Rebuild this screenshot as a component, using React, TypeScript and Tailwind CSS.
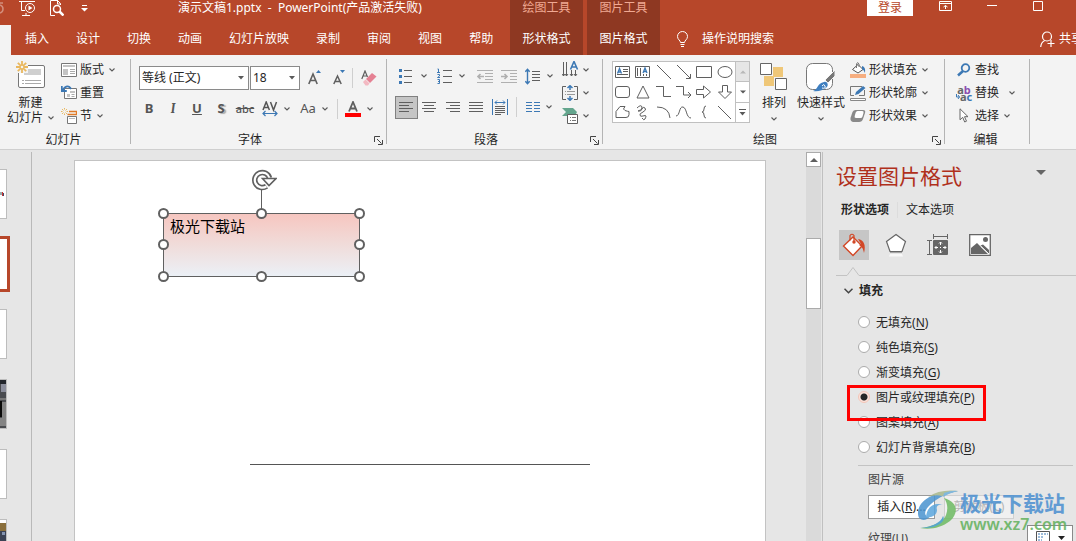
import React, { useState } from "react";

type Kids = { children?: React.ReactNode };

function Chevron() {
  return (
    <svg width="6" height="4" viewBox="0 0 6 4" fill="none" className="shrink-0">
      <path d="M.5 .5 3 3 5.500 .5" stroke="#5a5a5a" strokeWidth="1.1" />
    </svg>
  );
}

function Caret() {
  return (
    <svg width="6" height="4" viewBox="0 0 6 4" className="pointer-events-none absolute right-[5px] top-[10px]">
      <path d="M0 0h6L3 3.5z" fill="#5a5a5a" />
    </svg>
  );
}

function Group({ label, width, launcher, children }: Kids & { label: string; width: string; launcher?: boolean }) {
  return (
    <section aria-label={label} className={`relative flex shrink-0 flex-col pt-[3px] ${width}`}>
      <div className="flex h-[69px]">{children}</div>
      <div className={`flex h-[22px] items-center justify-center pt-[3px] ${launcher ? "pr-[18px]" : "pr-1"}`}>{label}</div>
      {launcher && (
        <button aria-label={label + "设置"} className="absolute bottom-1 right-1">
          <svg width="9" height="9" viewBox="0 0 9 9" fill="none" stroke="#444">
            <path d="M.5 6V.5H6M3 3l4.5 4.5M8.5 4v4.500H4" />
          </svg>
        </button>
      )}
      <span className="absolute bottom-[5px] right-0 top-1 w-px bg-[#b4b4b4]" />
    </section>
  );
}

function Row({ icon, label, menu, wide }: { icon: React.ReactNode; label: string; menu?: boolean; wide?: boolean }) {
  return (
    <button className={`flex h-[23px] items-center whitespace-nowrap ${wide ? "gap-[10px]" : "gap-[5px]"}`}>
      <span className="flex items-center gap-[3px]">
        <span className="flex w-4 justify-center">{icon}</span>
        {label}
      </span>
      {menu && <Chevron />}
    </button>
  );
}

function Tool({ label, menu, children }: Kids & { label: string; menu?: boolean }) {
  return (
    <button aria-label={label} className={`flex h-6 items-center ${menu ? "w-[38px] gap-[6px] pl-1" : "w-6 justify-center"}`}>
      {children}
      {menu && <Chevron />}
    </button>
  );
}

function Lines({ rows, color = "#5f5f5f" }: { rows: [number, number][]; color?: string }) {
  return (
    <svg width="16" height="14" viewBox="0 0 16 14" stroke={color}>
      {rows.map(([a, b], i) => (
        <path key={i} d={`M${a} ${i * 3 + 2.5}H${b}`} />
      ))}
    </svg>
  );
}

const tabs = ["插入", "设计", "切换", "动画", "幻灯片放映", "录制", "审阅", "视图", "帮助"];

function Header() {
  return (
    <header className="flex h-[55px] shrink-0 overflow-hidden bg-[#b7472a] text-white">
      <div className="flex w-[510px] shrink-0 flex-col justify-between">
        <div className="flex h-4 items-center">
          <svg width="4" height="14" viewBox="0 0 4 14" fill="none" stroke="#d38e7c" strokeWidth="1.500">
            <path d="M0 2h3M0 12c4-1 4-7 0-8" />
          </svg>
          <button aria-label="从头开始" className="ml-[15px]">
            <svg width="17" height="16" viewBox="0 0 17 16" fill="none" stroke="#fff">
              <path d="M0 1.500h16M2.500 2v8.500H6M3 15.500h8M7 13v2" />
              <circle cx="11" cy="8" r="4.500" />
              <path d="M9.500 5.500 13.500 8l-4 2.500z" fill="#fff" stroke="none" />
            </svg>
          </button>
          <button aria-label="打印预览" className="ml-[14px]">
            <svg width="14" height="16" viewBox="0 0 14 16" fill="none" stroke="#fff">
              <path d="M5 15.500H.5V.5h7l3 3V5M7.500 0v4h3" />
              <circle cx="7" cy="9" r="3.500" strokeWidth="1.500" />
              <path d="m9.500 11.500 4 4" strokeWidth="2.500" />
            </svg>
          </button>
          <button aria-label="自定义快速访问工具栏" className="ml-[17px]">
            <svg width="7" height="7" viewBox="0 0 7 7" fill="#fff">
              <path d="M1 0h5v1H1zM0 3h7L3.500 6.500z" />
            </svg>
          </button>
          <h1 className="ml-[90px] whitespace-pre">演示文稿1.pptx{"  -  "}PowerPoint(产品激活失败)</h1>
        </div>
        <nav className="flex h-[30px]">
          <span className="w-[11px] bg-[#f3f3f3]" />
          {tabs.map((t) => (
            <button key={t} className="whitespace-nowrap pb-[2px] pl-[14px] pr-[13px]">{t}</button>
          ))}
        </nav>
      </div>
      {[["绘图工具", "形状格式"], ["图片工具", "图片格式"]].map(([a, b]) => (
        <div key={a} className="mr-1 flex w-[73px] shrink-0 flex-col items-center justify-between bg-[#8e3822]">
          <span className="h-4 leading-4 text-[#f0a993]">{a}</span>
          <button className="h-[30px] pb-[2px]">{b}</button>
        </div>
      ))}
      <div className="flex min-w-0 flex-1 flex-col justify-between">
        <div className="flex h-4 items-start justify-end pr-[33px]">
          <button className="h-4 w-[46px] bg-white leading-3 text-[#b7472a]">登录</button>
          <button aria-label="功能区显示选项" className="ml-[26px] mt-px">
            <svg width="13" height="10" viewBox="0 0 13 10" fill="none" stroke="#fff">
              <path d="M.5.5h12v9H.5zM1 2.500h11M6.500 8V4.500M4.500 6l2-1.500 2 1.500" />
            </svg>
          </button>
          <button aria-label="最小化" className="ml-[35px] mt-[5px]">
            <svg width="10" height="1" viewBox="0 0 10 1" fill="#fff"><path d="M0 0h10v1H0z" /></svg>
          </button>
          <button aria-label="最大化" className="ml-[36px] mt-px">
            <svg width="10" height="10" viewBox="0 0 10 10" fill="none" stroke="#fff"><path d="M.5.5h9v9h-9z" /></svg>
          </button>
        </div>
        <div className="flex h-[30px] items-center pb-[2px] pl-[12px]">
          <svg width="13" height="17" viewBox="0 0 13 17" fill="none" stroke="#fff">
            <path d="M4.500 11.500c0-2-3-3-3-6a5 5 0 0 1 10 0c0 3-3 4-3 6zM4.500 13.500h4M5 15.500h3" />
          </svg>
          <button className="ml-[13px] whitespace-nowrap">操作说明搜索</button>
          <button className="ml-auto flex w-[36px] items-center gap-1 overflow-hidden whitespace-nowrap">
            <svg width="15" height="17" viewBox="0 0 15 17" fill="none" stroke="#fff" strokeWidth="1.200" className="shrink-0">
              <circle cx="7" cy="5.500" r="4.500" />
              <path d="M.7 16c.3-3.500 2-5.500 4-6.500M11 9v7M7.500 12.500h7" />
            </svg>
            共享
          </button>
        </div>
      </div>
    </header>
  );
}

function Spark({ r }: { r: number }) {
  return (
    <g stroke="#e9b85f" strokeWidth={r > 4 ? 1.8 : 1}>
      <path d={`M${r} 0V${r - 2}M${r} ${r + 2}V${2 * r}M0 ${r}H${r - 2}M${r + 2} ${r}H${2 * r}`} />
      <path d={`M${r * 0.3} ${r * 0.3}L${r * 0.7} ${r * 0.7}M${r * 1.3} ${r * 1.3}L${r * 1.7} ${r * 1.7}M${r * 1.7} ${r * 0.3}L${r * 1.3} ${r * 0.7}M${r * 0.7} ${r * 1.3}L${r * 0.3} ${r * 1.7}`} />
    </g>
  );
}

function SlidesGroup() {
  return (
    <Group label="幻灯片" width="w-[131px]">
      <button className="flex w-[61px] flex-col items-center pt-[3px] leading-[15px]">
        <svg width="30" height="28" viewBox="0 0 30 28" fill="none">
          <rect x="2.500" y="4.500" width="26" height="22" rx="1.500" fill="#fff" stroke="#777" />
          <path d="M12 8h13v6H8v-3z" fill="#cfcfcf" />
          <path d="M6 19.500h2m1 0h16M6 22.500h2m1 0h16" stroke="#aaa" />
          <path d="M0 0h12v12H0z" fill="#f3f3f3" />
          <Spark r={6} />
          <circle cx="6" cy="6" r="2" stroke="#e9b85f" strokeWidth="1.500" />
        </svg>
        <span className="mt-[6px]">新建</span>
        <span className="flex items-center gap-[5px] whitespace-nowrap">幻灯片<Chevron /></span>
      </button>
      <div className="flex flex-col items-start">
        <Row label="版式" menu icon={
          <svg width="16" height="14" viewBox="0 0 16 14" fill="none">
            <path d="M.5.5h15v13H.5z" fill="#fff" stroke="#777" />
            <path d="M2 2h12v2H2zM2 6h5v6H2z" fill="#c4c4c4" />
            <path d="M9 6.500h5M9 8.500h5M9 10.500h5" stroke="#aaa" />
          </svg>
        } />
        <Row label="重置" icon={
          <svg width="16" height="15" viewBox="0 0 16 15" fill="none">
            <path d="M3.500 3.500h12v10h-12z" fill="#fff" stroke="#777" />
            <path d="M9 6h5v2H9zM6 9h3v3H6z" fill="#c4c4c4" />
            <path d="M10.500 9.500h3M10.500 11.500h3" stroke="#aaa" />
            <path d="M10 4C8 0 4 .5 2 5M.8 1v5h5" stroke="#3c78b4" strokeWidth="1.800" />
          </svg>
        } />
        <Row label="节" menu icon={
          <svg width="16" height="16" viewBox="0 0 16 16" fill="none">
            <Spark r={3.5} />
            <path d="M8 3.500h7.500v3H6.500" stroke="#e07b28" strokeWidth="1.300" />
            <path d="M6.500 8.500h9v7h-9z" fill="#fff" stroke="#777" />
            <path d="M8 10.500h6" stroke="#bbb" />
          </svg>
        } />
      </div>
    </Group>
  );
}

function FontGroup() {
  return (
    <Group label="字体" width="w-[256px]" launcher>
      <div className="flex flex-col gap-[7px] pt-2">
        <div className="flex h-6 items-center pl-2">
          <label className="relative">
            <select aria-label="字体名称" className="h-6 w-[110px] appearance-none border border-[#8a8a8a] bg-white px-[2px] text-[12px] text-[#262626]"><option>等线 (正文)</option></select>
            <Caret />
          </label>
          <label className="relative ml-px">
            <select aria-label="字号" className="h-6 w-[50px] appearance-none border border-[#8a8a8a] bg-white px-[2px] text-[12px] text-[#262626]"><option>18</option></select>
            <Caret />
          </label>
          <button aria-label="增大字号" className="ml-2">
            <svg width="13" height="16" viewBox="0 0 13 16" fill="none">
              <path d="M.8 14 5 4l4.200 10M2.300 10.500h5.400" stroke="#5f5f5f" strokeWidth="1.600" /><path d="M8 3h5l-2.500-3z" fill="#3c78b4" />
            </svg>
          </button>
          <button aria-label="减小字号" className="ml-3">
            <svg width="13" height="16" viewBox="0 0 13 16" fill="none">
              <path d="M.8 14 4.500 6l3.700 8M2 11.500h5" stroke="#5f5f5f" strokeWidth="1.500" /><path d="M7 0h5L9.500 3z" fill="#3c78b4" />
            </svg>
          </button>
          <span className="ml-[6px] h-5 w-px bg-[#cfcfcf]" />
          <button aria-label="清除所有格式" className="ml-2">
            <svg width="16" height="16" viewBox="0 0 16 16" fill="none">
              <path d="M.8 9 4 1l2.500 6M2 6h4" stroke="#5f5f5f" strokeWidth="1.200" />
              <path d="m2 12 2.500-2.500 4 4L7 15.500H4.500z" fill="#f3b9c2" /><path d="m5 9 6-6 4.500 3.500-6.500 6.500z" fill="#e58193" />
            </svg>
          </button>
        </div>
        <div className="flex h-6 items-center pl-[6px] text-[13px] font-bold text-[#555]">
          <Tool label="加粗">B</Tool>
          <Tool label="倾斜"><i className="font-serif">I</i></Tool>
          <Tool label="下划线"><u>U</u></Tool>
          <Tool label="文字阴影"><span className="[text-shadow:2px_1px_1px_#aaa]">S</span></Tool>
          <Tool label="删除线"><s className="text-[11px] font-medium">abc</s></Tool>
          <span className="w-[1px]" />
          <Tool label="字符间距" menu>
            <svg width="16" height="16" viewBox="0 0 16 16" fill="none" className="shrink-0">
              <path d="M1 9 4.200 1 7.400 9M2 6.500h4.400M8.500 1l3 8 3-8" stroke="#555" strokeWidth="1.500" />
              <path d="M1 12.500h14M3.500 10 1 12.500 3.500 15M12.500 10l2.500 2.500-2.500 2.500" stroke="#3c78b4" strokeWidth="1.200" />
            </svg>
          </Tool>
          <Tool label="更改大小写" menu><span className="w-4 font-normal">Aa</span></Tool>
          <span className="mx-[3px] h-5 w-px bg-[#cfcfcf]" />
          <Tool label="字体颜色" menu>
            <svg width="16" height="16" viewBox="0 0 16 16" fill="none" className="shrink-0">
              <path d="M4 10.500 8 1l4 9.500M5.200 7.500h5.600" stroke="#5f5f5f" strokeWidth="1.800" /><path d="M0 12h16v4H0z" fill="#f00" />
            </svg>
          </Tool>
        </div>
      </div>
    </Group>
  );
}

function Indent({ right }: { right?: boolean }) {
  return (
    <svg width="16" height="15" viewBox="0 0 16 15" fill="none" stroke="#b0b0b0">
      <path d={right ? "M0 1.500h16M9 4.500h7M9 7.500h7M9 10.500h7M0 13.500h16" : "M0 1.500h16M8 4.500h8M8 7.500h8M8 10.500h8M0 13.500h16"} />
      <path d={right ? "M0 7.500h6M3.500 5 6 7.500 3.500 10" : "M7 7.500H1M3.500 5 1 7.500 3.500 10"} strokeWidth="1.600" />
    </svg>
  );
}

function ParagraphGroup() {
  return (
    <Group label="段落" width="w-[216px]" launcher>
      <div className="flex w-[172px] flex-col gap-[7px] pl-2 pt-[6px]">
        <div className="flex h-6 items-center">
          <Tool label="项目符号" menu>
            <svg width="16" height="16" viewBox="0 0 16 16" className="shrink-0">
              <path d="M5 2.500h8M5 8.500h8M5 14.500h8" stroke="#5f5f5f" /><path d="M0 1h3v3H0zM0 7h3v3H0zM0 13h3v3H0z" fill="#3c78b4" />
            </svg>
          </Tool>
          <Tool label="编号" menu>
            <svg width="16" height="16" viewBox="0 0 16 16" className="shrink-0" fill="none">
              <path d="M6 2.500h9M6 8.500h9M6 14.500h9" stroke="#5f5f5f" />
              <path d="M.5 1h1v3M0 4.500h3M.5 6.500h2V8L.5 9.500h2.500M.5 11.500h2v4h-2M1 13.500h1.500" stroke="#3c78b4" />
            </svg>
          </Tool>
          <span className="w-[2px]" />
          <Tool label="减少缩进"><Indent /></Tool>
          <Tool label="增加缩进"><Indent right /></Tool>
          <Tool label="行距" menu>
            <svg width="16" height="17" viewBox="0 0 16 17" fill="none" className="shrink-0">
              <path d="M7 3.500h8M7 6.500h8M7 9.500h8M7 12.500h8" stroke="#5f5f5f" />
              <path d="M2.500 1v15M.3 3.800 2.500 1.300 4.700 3.800M.3 13.200l2.200 2.500 2.200-2.500" stroke="#3c78b4" strokeWidth="1.400" />
            </svg>
          </Tool>
        </div>
        <div className="flex h-6 items-center">
          <button aria-label="左对齐" aria-pressed="true" className="flex h-[23px] w-[23px] items-center justify-center border border-[#808080] bg-[#c5c5c5]">
            <Lines rows={[[1, 15], [1, 11], [1, 15], [1, 11]]} />
          </button>
          <Tool label="居中"><Lines rows={[[1, 15], [3, 13], [1, 15], [3, 13]]} /></Tool>
          <Tool label="右对齐"><Lines rows={[[1, 15], [5, 15], [1, 15], [5, 15]]} /></Tool>
          <Tool label="两端对齐"><Lines rows={[[1, 15], [1, 15], [1, 15], [1, 15]]} /></Tool>
          <Tool label="分散对齐">
            <svg width="16" height="16" viewBox="0 0 16 16" fill="none">
              <path d="M3 7.500h10M3 9.500h10M3 11.500h10M3 13.500h10M3 15.500h6" stroke="#5f5f5f" />
              <path d="M.5 0v16M15.500 0v16M3 3.500h10M5 1.500l-2 2 2 2M11 1.500l2 2-2 2" stroke="#3c78b4" />
            </svg>
          </Tool>
          <span className="ml-1 mr-[5px] h-5 w-px bg-[#cfcfcf]" />
          <Tool label="分栏" menu>
            <svg width="14" height="12" viewBox="0 0 14 12" className="shrink-0">
              <path d="M0 1.500h6M8 1.500h6M0 4.500h6M8 4.500h6M0 7.500h6M8 7.500h6M0 10.500h6M8 10.500h6" stroke="#3c78b4" />
            </svg>
          </Tool>
        </div>
      </div>
      <div className="flex flex-col pl-[3px]">
        <button aria-label="文字方向" className="flex h-[23px] items-center gap-1">
          <svg width="17" height="17" viewBox="0 0 17 17" fill="none">
            <path d="M1.500 1v14M4.500 1v14M9.500 9v6M13.500 9v6M0 13l1.500 2L3 13l1.500 2L6 13M8 13l1.500 2 1.500-2M12 13l1.500 2 1.500-2" stroke="#5f5f5f" />
            <path d="M8.500 8.500 12 .5l3.500 8M9.500 6h5" stroke="#3c78b4" strokeWidth="1.600" />
          </svg>
          <Chevron />
        </button>
        <button aria-label="对齐文本" className="flex h-[23px] items-center gap-1">
          <svg width="17" height="16" viewBox="0 0 17 16" fill="none">
            <path d="M4 1.500H.5v13H4M12 1.500h3.500v13H12" stroke="#5f5f5f" />
            <path d="M3 6.500h1M5 6.500h8M3 9.500h1M5 9.500h8" stroke="#999" />
            <path d="M8 .5V5M5.500 3 8 .7 10.500 3M8 11v4.500M5.500 13 8 15.300l2.500-2.300" stroke="#3c78b4" strokeWidth="1.500" />
          </svg>
          <Chevron />
        </button>
        <button aria-label="转换为 SmartArt" className="flex h-[23px] items-center gap-1">
          <svg width="17" height="17" viewBox="0 0 17 17" fill="none">
            <path d="M0 1h11l4 4-2 4H0l4-4z" fill="#63a58d" />
            <path d="M5.500 7.500h10v9h-10z" fill="#fff" stroke="#5f5f5f" />
            <path d="M8 10.500h1M10 10.500h4M8 13.500h1M10 13.500h4" stroke="#777" />
          </svg>
          <Chevron />
        </button>
      </div>
    </Group>
  );
}

const shapePaths = [
  "M2.500 4.500h14v11h-14zM10 7.500h5M10 9.500h5M4 12.500h11",
  "M2.500 4.500h14v11h-14zM4.500 6v8M7.500 6v8M10.500 12v2M13.500 12v2",
  "M3 3l14 14", "M3 3l13 13M16.500 12v4.500H12", "M2.500 4.500h15v11h-15z",
  "M17 10a7 5.500 0 1 1-14 0 7 5.500 0 1 1 14 0z",
  "M5 4.500h9q2.500 0 2.500 2.500v6q0 2.500-2.500 2.500H5q-2.500 0-2.500-2.500v-6q0-2.500 2.500-2.500z",
  "M10 4l6 12H4z", "M2 4.500h7.500v10H17", "M2 4.500h7.500v8.500H17M14 10l3 3-3 3",
  "M2.500 7.500h7V4l7 6-7 6v-3.500h-7z", "M7.500 3.500h5V10h4L10 16.500 3.500 10h4z",
  "M3 15.500v-6l4-5h5q-3 3 0 4t4 1v3q0 3-3 3z",
  "M4 6q4-4 5-1t-4 4q3 1 4-2t3-1-2 4-3 3q0 2 3 1t3 0-1 3-3-1",
  "M3 5q12 0 13 11", "M2 14C6 14 5 4 9 5s3 11 8 11", "M12 4q-2 0-2 3 0 3-2 3 2 0 2 3 0 3 2 3", "M3 4l13 13",
];

function DrawingGroup() {
  return (
    <Group label="绘图" width="w-[342px]" launcher>
      <div className="ml-[9px] mt-[3px] flex h-[62px] w-[138px] shrink-0 border border-[#c0c0c0] bg-white">
        <div className="grid w-[122px] grid-cols-6">
          {shapePaths.map((d, i) => (
            <button key={i} aria-label={`形状 ${i + 1}`} className="h-5 w-5">
              <svg width="20" height="20" viewBox="0 0 20 20" fill="none" stroke="#5f5f5f">
                <path d={d} />
                {i === 0 && <path d="M4.500 11.500 6.500 6.500l2 5M5 10h3" stroke="#3c78b4" strokeWidth="1.300" />}
                {i === 1 && <path d="M10 11l2-5 2 5M10.500 9.500h3" stroke="#3c78b4" strokeWidth="1.300" />}
              </svg>
            </button>
          ))}
        </div>
        <div className="flex flex-1 flex-col divide-y divide-[#c0c0c0] border-l border-[#c0c0c0]">
          <button aria-label="上一行" className="flex flex-1 items-center justify-center bg-[#e6e6e6]">
            <svg width="6" height="4" viewBox="0 0 6 4" fill="#b8b8b8"><path d="M0 3.500h6L3 .5z" /></svg>
          </button>
          <button aria-label="下一行" className="flex flex-1 items-center justify-center">
            <svg width="6" height="4" viewBox="0 0 6 4" fill="#5a5a5a"><path d="M0 .5h6L3 3.500z" /></svg>
          </button>
          <button aria-label="其他形状" className="flex flex-1 items-center justify-center">
            <svg width="7" height="7" viewBox="0 0 7 7" fill="#5a5a5a"><path d="M0 0h7v1H0zM.5 3h6l-3 3.500z" /></svg>
          </button>
        </div>
      </div>
      <button className="ml-[6px] flex w-9 flex-col items-center pt-[5px]">
        <svg width="28" height="28" viewBox="0 0 28 28">
          <path d="M13 4h10v10H13zM4 13h10v10H4z" fill="#efc778" />
          <path d="M.5.500h11v11H.5zM15.500 15.500h11v11h-11z" fill="#fff" stroke="#666" />
        </svg>
        <span className="mb-[7px] mt-1 leading-[15px]">排列</span>
        <Chevron />
      </button>
      <button className="ml-1 flex w-[50px] flex-col items-center whitespace-nowrap pt-[5px]">
        <svg width="30" height="30" viewBox="0 0 30 30" fill="none" className="-mb-[2px]">
          <rect x=".5" y=".5" width="26" height="26" rx="6" fill="#fff" stroke="#777" />
          <path d="M29 7v6l-7 7-3-3z" fill="#777" stroke="#f3f3f3" />
          <path d="M18 19c4-1 5 4 2 6s-8 4-13 3c5-1 4-8 11-9z" fill="#3f7fc0" />
          <path d="M16 23q2-3 3 0t-3 2" stroke="#fff" />
        </svg>
        <span className="mb-[7px] mt-1 leading-[15px]">快速样式</span>
        <Chevron />
      </button>
      <div className="ml-1 flex flex-col items-start">
        <Row label="形状填充" menu icon={
          <svg width="16" height="16" viewBox="0 0 16 16" fill="none">
            <path d="M8 2.500 13 7.500 8 11 2.500 7.500z" fill="#fff" stroke="#555" /><path d="M6.500 6V2q1-3 2.500 0v3" stroke="#777" />
            <path d="M12 4q4 1 3 7-1-3-3-4z" fill="#3c78b4" /><path d="M0 12h16v4H0z" fill="#f6ae80" />
          </svg>
        } />
        <Row label="形状轮廓" menu icon={
          <svg width="16" height="16" viewBox="0 0 16 16" fill="none">
            <path d="M12 1.500H.5v9H4M14.500 5v5.500H9" stroke="#777" /><path d="m5 10 1-3 7-6 2.500 2-7 6z" fill="#3c78b4" />
            <path d="M.5 13.500h15v2H.5z" fill="#fff" stroke="#888" />
          </svg>
        } />
        <Row label="形状效果" menu icon={
          <svg width="16" height="14" viewBox="0 0 16 14">
            <path d="M3 13q-3-1-2.500-4l2-6q1-2 3-2h7.500q3 0 2 3l-2 6q-1 3-4 3z" fill="#8a8a8a" />
            <path d="M6 9q-2 0-1.300-2l1-3.500Q6.200 2 7.500 2h4.700q2 0 1.300 2L12.500 7.500Q12 9 10.500 9z" fill="#fff" />
          </svg>
        } />
      </div>
    </Group>
  );
}

function EditingGroup() {
  return (
    <Group label="编辑" width="w-[85px]">
      <div className="ml-[11px] flex flex-col items-start">
        <Row label="查找" icon={
          <svg width="14" height="14" viewBox="0 0 14 14" fill="none" stroke="#3c78b4">
            <circle cx="8.500" cy="5" r="3.800" strokeWidth="1.800" /><path d="M6 8 1 12.500" strokeWidth="2.500" />
          </svg>
        } />
        <Row label="替换" menu wide icon={
          <span className="flex w-4 flex-col text-[11px] font-bold leading-[7px]">
            <span className="text-[#666]">a<span className="text-[#8a4fb0]">b</span></span>
            <span className="flex items-center text-[#666]">
              <svg width="4" height="5" viewBox="0 0 4 5" fill="none" stroke="#3c78b4" className="shrink-0"><path d="M.5 0v3h3M2 1l1.500 2L2 5" /></svg>
              a<span className="text-[#3c78b4]">c</span>
            </span>
          </span>
        } />
        <Row label="选择" menu icon={
          <svg width="10" height="15" viewBox="0 0 10 15" fill="#fff" stroke="#666">
            <path d="M1 .800v11l2.700-2.500 2 4.700 1.800-.8-2-4.500H9z" />
          </svg>
        } />
      </div>
    </Group>
  );
}

function Thumbnails() {
  return (
    <aside aria-label="幻灯片缩略图" className="mt-[2px] w-8 shrink-0 border-r border-[#b9b9b9] pt-[17px]">
      <div className="flex flex-col gap-5">
        <div className="flex h-[50px] w-[7px] items-center border border-l-0 border-[#bdbdbd] bg-white">
          <svg width="4" height="4" viewBox="0 0 4 4"><path d="M0 0h2v3H0z" fill="#9aa" /><path d="M2 0h1v4H2z" fill="#c33" /><path d="M3 1h1v3H3z" fill="#446" /></svg>
        </div>
        <div className="-my-[3px] h-14 w-[10px] border-[3px] border-l-0 border-[#b7472a] bg-white" />
        <div className="h-[50px] w-[7px] border border-l-0 border-[#bdbdbd] bg-white" />
        <div className="h-[50px] w-[7px] border border-l-0 border-[#bdbdbd]">
          <svg width="6" height="48" viewBox="0 0 6 48">
            <path d="M0 0h6v48H0z" fill="#4a4c50" /><path d="M0 0h6v4H0z" fill="#22262c" /><path d="M1 4h5v8H1z" fill="#8b8e9c" />
            <path d="M0 18h6v2H0z" fill="#777" /><path d="M0 21h2v16H0z" fill="#0a0a0a" /><path d="M2 22h4v24H2zM0 38h2v8H0z" fill="#848484" />
          </svg>
        </div>
        <div className="h-[50px] w-[7px] border border-l-0 border-[#bdbdbd] bg-white" />
        <div className="h-[50px] w-[7px] border border-l-0 border-[#bdbdbd] bg-white pt-[3px]">
          <svg width="6" height="45" viewBox="0 0 6 45">
            <path d="M0 0h6v45H0z" fill="#3b4254" /><path d="M0 0h6v8H0z" fill="#8a6f3c" /><path d="M2 9h3v3H2z" fill="#8494b0" />
          </svg>
        </div>
      </div>
    </aside>
  );
}

const handles = [
  "left-[-6px] top-[-6px]", "left-[92px] top-[-6px]", "right-[-6px] top-[-6px]",
  "left-[-6px] top-[25px]", "right-[-6px] top-[25px]",
  "left-[-6px] bottom-[-6px]", "left-[92px] bottom-[-6px]", "right-[-6px] bottom-[-6px]",
];

function Canvas() {
  return (
    <main className="flex min-w-0 flex-1 pl-[42px] pr-10 pt-[10px]">
      <div className="relative flex-1 overflow-hidden border border-b-0 border-[#c3c3c3] bg-white">
        <div className="absolute left-[88px] top-[52px] h-16 w-[197px] border border-[#606060] bg-gradient-to-b from-[#f6c6c0] via-[#f0dcda] to-[#ebf0f6] px-[6px] text-[15px] leading-6 text-black">
          极光下载站
          <span className="absolute left-[97px] top-[-25px] h-6 w-px bg-[#606060]" />
          <svg width="26" height="22" viewBox="0 0 26 22" fill="none" className="absolute left-[87px] top-[-45px]">
            <path d="M15.500 17.300A7.500 7.500 0 1 1 18.500 9" stroke="#606060" strokeWidth="5.500" />
            <path d="M15.500 17.300A7.500 7.500 0 1 1 18.500 9" stroke="#fff" strokeWidth="2.200" />
            <path d="M11.500 9.500H25l-7 7z" fill="#fff" stroke="#606060" strokeWidth="1.600" />
          </svg>
          {handles.map((h) => (
            <span key={h} className={`absolute h-[11px] w-[11px] rounded-full border-2 border-[#606060] bg-white ${h}`} />
          ))}
        </div>
        <span className="absolute left-[175px] top-[303px] h-px w-[340px] bg-[#555]" />
      </div>
    </main>
  );
}

function Scrollbar() {
  return (
    <div className="mt-[2px] flex w-[17px] shrink-0 flex-col border-r border-[#c0c0c0]">
      <div className="flex w-[15px] flex-1 flex-col bg-[#dadada]">
        <button aria-label="向上滚动" className="flex h-[15px] items-center justify-center border border-[#ababab] bg-white">
          <svg width="8" height="4" viewBox="0 0 8 4" fill="#5f5f5f"><path d="M0 4h8L4 0z" /></svg>
        </button>
        <span className="mt-[71px] h-[71px] border border-[#ababab] bg-white" />
      </div>
    </div>
  );
}

const fills: [string, string][] = [["无填充", "N"], ["纯色填充", "S"], ["渐变填充", "G"], ["图片或纹理填充", "P"], ["图案填充", "A"], ["幻灯片背景填充", "B"]];

function FormatPane() {
  const [fill, setFill] = useState("P");
  return (
    <aside className="relative flex w-[253px] shrink-0 flex-col overflow-hidden pl-[13px] pt-[10px]">
      <div className="flex h-8 shrink-0 items-center justify-between pr-[30px]">
        <h2 className="text-[21px] leading-8 text-[#b0301c]">设置图片格式</h2>
        <button aria-label="窗格选项" className="-mt-2">
          <svg width="10" height="5" viewBox="0 0 10 5" fill="#666"><path d="M0 0h10L5 5z" /></svg>
        </button>
      </div>
      <div className="mt-[10px] flex h-4 shrink-0 items-center pl-[5px]">
        <button className="font-bold leading-4">形状选项</button>
        <span className="mx-2 h-4 w-px bg-[#dcdcdc]" />
        <button className="leading-4">文本选项</button>
      </div>
      <div className="mt-3 flex h-[30px] shrink-0 items-center gap-3 pl-[3px]">
        <button aria-label="填充与线条" className="flex h-[30px] w-[30px] items-center justify-center bg-[#c6c6c6]">
          <svg width="24" height="24" viewBox="0 0 24 24" fill="none">
            <path d="M11 4 20 13l-9 9.500L1.500 13z" fill="#fff" stroke="#d24726" strokeWidth="1.400" />
            <path d="M8 7.500V2.500q2-2.500 4 0V8" stroke="#d24726" strokeWidth="1.200" /><circle cx="12" cy="9" r="1.700" fill="#d24726" />
            <path d="M16 6c6 1 8 6 6 14-1-5-2-6-5-8l2-1z" fill="#d24726" />
          </svg>
        </button>
        <button aria-label="效果" className="flex h-[30px] w-[30px] items-center justify-center">
          <svg width="22" height="24" viewBox="0 0 22 24" fill="none">
            <path d="M11 1.500 20.500 8.500 17 18.500H5L1.500 8.500z" fill="#fff" stroke="#666" strokeWidth="1.200" />
            <path d="M5 18h12v1.500H5z" fill="#666" /><path d="M5 21h12l1 2.500H4z" fill="#f8f8f8" />
          </svg>
        </button>
        <button aria-label="大小与属性" className="flex h-[30px] w-[30px] items-center justify-center">
          <svg width="22" height="22" viewBox="0 0 22 22" fill="none" stroke="#666">
            <path d="M6.500 0v5M20.500 0v5M7 2.500h13M0 6.500h5M0 20.500h5M2.500 7v13" />
            <rect x="6" y="6" width="15" height="15" rx="1" fill="#666" stroke="none" />
            <path d="M13.500 8v3M13.500 16v3M8 13.500h3M16 13.500h3M12 9.500l1.500-1.500L15 9.500M12 17.500l1.500 1.500 1.500-1.500M9.500 12 8 13.500 9.500 15M17.500 12l1.500 1.500-1.500 1.500M13 13.500h1" stroke="#fff" />
          </svg>
        </button>
        <button aria-label="图片" className="flex h-[30px] w-[30px] items-center justify-center">
          <svg width="22" height="22" viewBox="0 0 22 22" fill="none">
            <path d="M.700.700h20.600v20.600H.700z" fill="#fff" stroke="#666" strokeWidth="1.300" />
            <circle cx="16.500" cy="5.500" r="2.500" fill="#666" />
            <path d="M2 20v-6l6-5 11 11z" fill="#666" /><path d="m11.500 11.500 2.500-1 6 5.500v4z" fill="#666" /><path d="m12 12.500 8 7.500" stroke="#fff" />
          </svg>
        </button>
      </div>
      <svg viewBox="0 0 240 10" className="mt-[6px] h-[10px] w-full shrink-0" fill="none" stroke="#c3c3c3"><path d="M0 9.500h11l6-8 6 8h217" /></svg>
      <button className="mt-[5px] flex h-5 shrink-0 items-center gap-[6px] pl-[8px] font-bold">
        <svg width="9" height="6" viewBox="0 0 9 6" fill="none" stroke="#444" strokeWidth="1.500"><path d="m.5.7 4 4 4-4" /></svg>
        填充
      </button>
      <fieldset className="relative mt-[9px] flex flex-col pl-[22px]">
        {fills.map(([t, k]) => (
          <label key={k} className="flex h-[25px] items-center gap-[6px]">
            <input
              type="radio" name="fill" checked={fill === k} onChange={() => setFill(k)}
              className="mb-px h-3 w-3 appearance-none rounded-full border border-[#ababab] bg-white checked:border-[#f3c3b5] checked:bg-[radial-gradient(circle,#262626_0_3px,#fce4dc_4px)]"
            />
            <span>{t}(<u className="underline-offset-2">{k}</u>)</span>
          </label>
        ))}
        <span className="pointer-events-none absolute left-[11px] top-[75px] h-9 w-[139px] border-[3px] border-[#f00]" />
      </fieldset>
      <div className="ml-[22px] mr-[3px] mt-[5px] flex flex-col border-t border-[#c3c3c3] pl-[10px] pt-[5px]">
        <span className="h-[18px] leading-[18px] text-[#444]">图片源</span>
        <div className="mt-[6px] flex gap-[9px]">
          <button className="h-6 w-[67px] border border-[#9a9a9a] bg-white">插入(<u>R</u>)...</button>
          <button disabled className="h-6 w-[70px] border border-[#d0d0d0] bg-[#f0f0f0] text-[#b5b5b5]">剪贴板(<u>C</u>)</button>
        </div>
        <div className="mt-[6px] flex justify-between">
          <span className="mt-[5px] leading-[18px] text-[#444]">纹理(<u>U</u>)</span>
          <button aria-label="纹理" className="flex h-[26px] w-[46px] items-center justify-center gap-2 border border-[#8a8a8a] bg-white">
            <svg width="14" height="14" viewBox="0 0 14 14" fill="none"><path d="M.5.500h13v13H.5z" stroke="#555" /><path d="M2 3h10M2 6h6M2 9h4M2 12h3" stroke="#3c78b4" strokeDasharray="2 1" /></svg>
            <svg width="7" height="4" viewBox="0 0 7 4" fill="#222"><path d="M0 0h7L3.500 4z" /></svg>
          </button>
        </div>
      </div>
      <div className="pointer-events-none absolute left-[93px] top-[340px] flex whitespace-nowrap opacity-85">
        <svg width="44" height="42" viewBox="0 0 44 42">
          <path d="M42 1C24 0 3 8 2 22c-.5 8 5 9 9 7l4-3C9 28 7 23 12 17 18 10 28 4 42 1z" fill="#4a94d0" />
          <path d="M12 7Q24-1 42 1q-8 1-16 5Q20 4 12 7z" fill="#a9b98c" />
          <path d="M28 3q8-3 14-2-9 2-15 6z" fill="#6fb0dc" />
          <path d="M10 27c1-11 9-15 17-12-6-1-7 2-6 5 0 5-5 8-11 7z" fill="#5aa5dc" />
          <path d="M28 8c14 4 15 15 6 23-9 7-20 9-30 7 12-1 24-6 26-13 2-6 2-11-2-17z" fill="#6dba62" />
          <path d="M5 38c10-1 20-5 22-12 4 6-8 13-22 12z" fill="#3f9cc8" />
        </svg>
        <div className="flex flex-col">
          <span className="h-[26px] text-[21px] font-bold leading-[26px] text-[#4a8fd0]">极光下载站</span>
          <span className="text-[16px] font-semibold leading-[17px] text-[#62b15c]">www.xz7.com</span>
        </div>
      </div>
    </aside>
  );
}

export default function App() {
  return (
    <div className="flex h-screen flex-col overflow-hidden bg-[#e6e6e6] font-['Noto_Sans','Noto_Sans_CJK_SC',sans-serif] text-[12px] text-[#262626]">
      <Header />
      <div className="flex h-[95px] shrink-0 overflow-hidden border-b border-[#cfcfcf] bg-[#f3f3f3]">
        <SlidesGroup />
        <FontGroup />
        <ParagraphGroup />
        <DrawingGroup />
        <EditingGroup />
      </div>
      <div className="flex min-h-0 flex-1">
        <Thumbnails />
        <Canvas />
        <Scrollbar />
        <FormatPane />
      </div>
    </div>
  );
}
